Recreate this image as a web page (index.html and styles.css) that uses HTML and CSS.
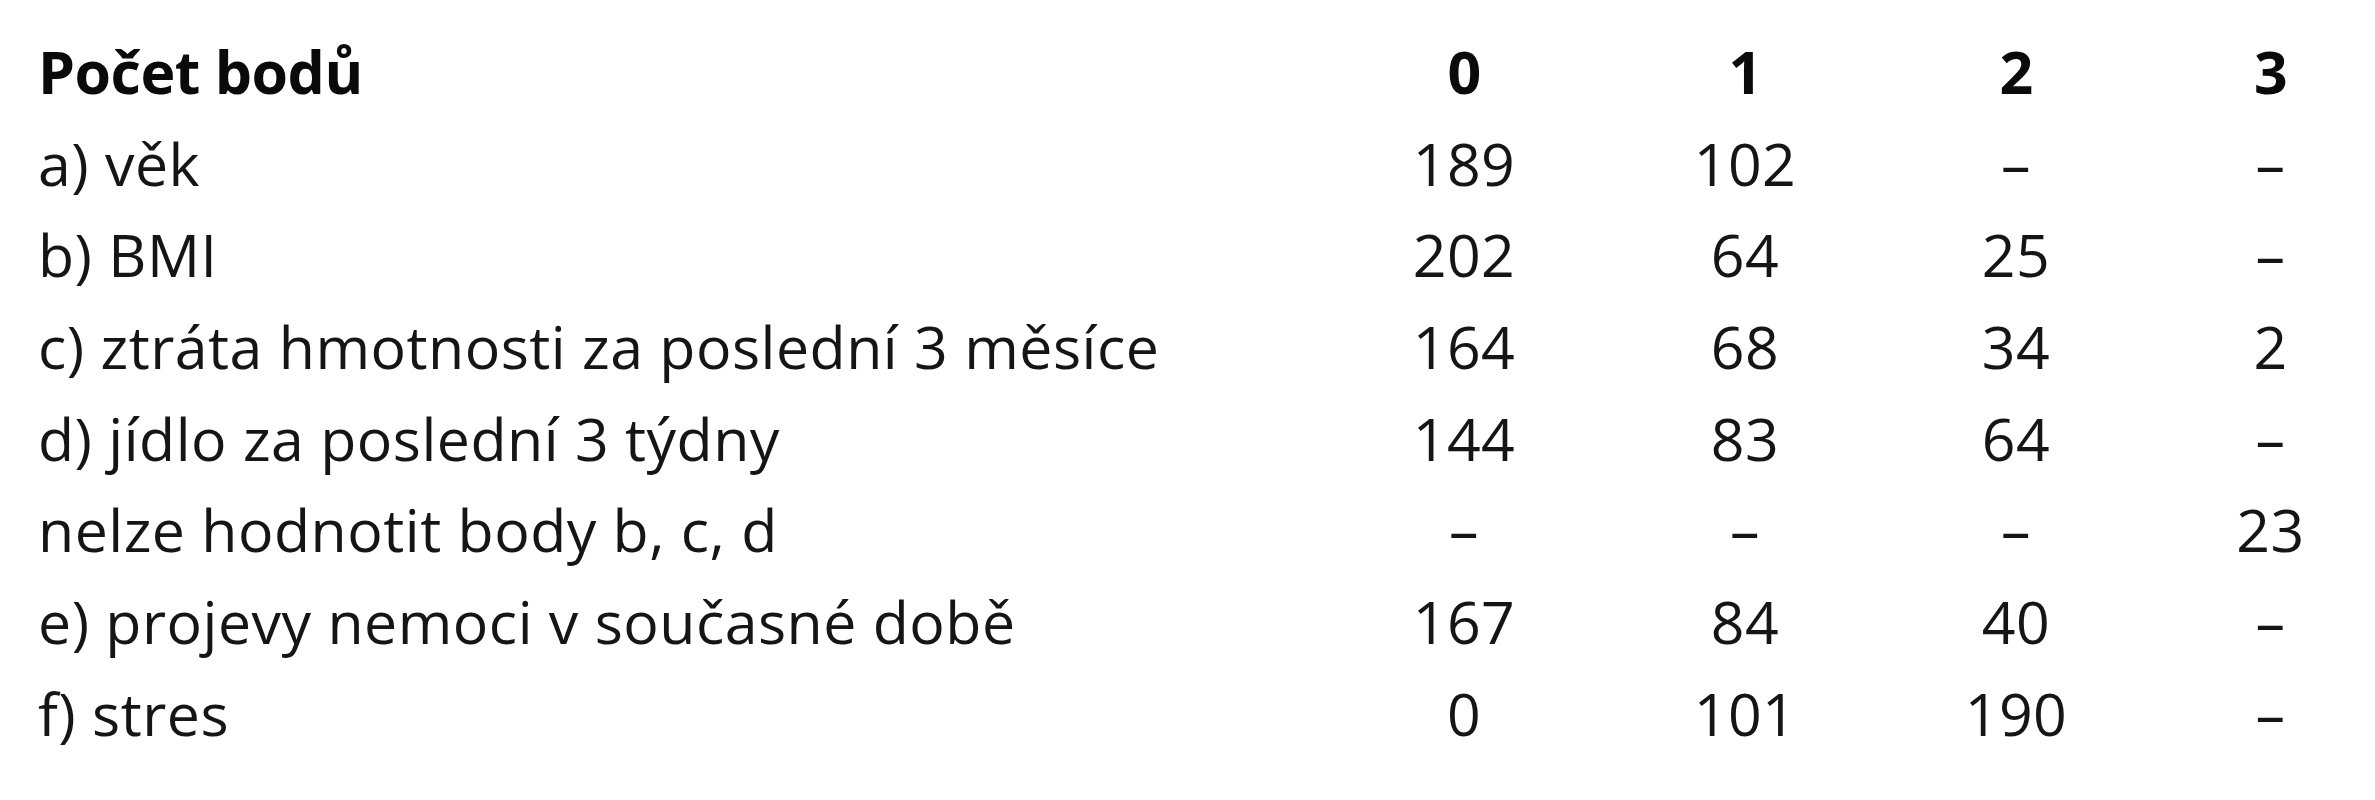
FILE: index.html
```html
<!DOCTYPE html>
<html lang="cs">
<head>
<meta charset="utf-8">
<title>Počet bodů</title>
<link rel="stylesheet" href="styles.css">
</head>
<body>
<div class="table">
  <div class="row head">
    <div class="label">Počet bodů</div>
    <div class="num">0</div>
    <div class="num">1</div>
    <div class="num">2</div>
    <div class="num last">3</div>
  </div>
  <div class="row">
    <div class="label">a) věk</div>
    <div class="num">189</div>
    <div class="num">102</div>
    <div class="num">–</div>
    <div class="num last">–</div>
  </div>
  <div class="row">
    <div class="label">b) BMI</div>
    <div class="num">202</div>
    <div class="num">64</div>
    <div class="num">25</div>
    <div class="num last">–</div>
  </div>
  <div class="row">
    <div class="label">c) ztráta hmotnosti za poslední 3 měsíce</div>
    <div class="num">164</div>
    <div class="num">68</div>
    <div class="num">34</div>
    <div class="num last">2</div>
  </div>
  <div class="row">
    <div class="label">d) jídlo za poslední 3 týdny</div>
    <div class="num">144</div>
    <div class="num">83</div>
    <div class="num">64</div>
    <div class="num last">–</div>
  </div>
  <div class="row">
    <div class="label">nelze hodnotit body b, c, d</div>
    <div class="num">–</div>
    <div class="num">–</div>
    <div class="num">–</div>
    <div class="num last">23</div>
  </div>
  <div class="row">
    <div class="label">e) projevy nemoci v současné době</div>
    <div class="num">167</div>
    <div class="num">84</div>
    <div class="num">40</div>
    <div class="num last">–</div>
  </div>
  <div class="row">
    <div class="label">f) stres</div>
    <div class="num">0</div>
    <div class="num">101</div>
    <div class="num">190</div>
    <div class="num last">–</div>
  </div>
</div>
</body>
</html>
```
FILE: styles.css
```css
html, body {
  margin: 0;
  padding: 0;
  background: #ffffff;
  overflow: hidden;
}
body {
  font-family: "Open Sans", "Liberation Sans", sans-serif;
  font-size: 59px;
  color: #151515;
}
.table {
  padding-top: 26px;
  padding-left: 38px;
  display: flex;
  flex-direction: column;
}
.row {
  display: grid;
  grid-template-columns: 1286px 280px 282px 260px 229px;
  height: 91.7px;
  line-height: 91.7px;
  white-space: nowrap;
  letter-spacing: 0.5px;
}
.head {
  font-weight: 700;
  letter-spacing: -0.5px;
  color: #0a0a0a;
}
.num {
  text-align: center;
}
.num.last {
  padding-left: 20px;
}
```
